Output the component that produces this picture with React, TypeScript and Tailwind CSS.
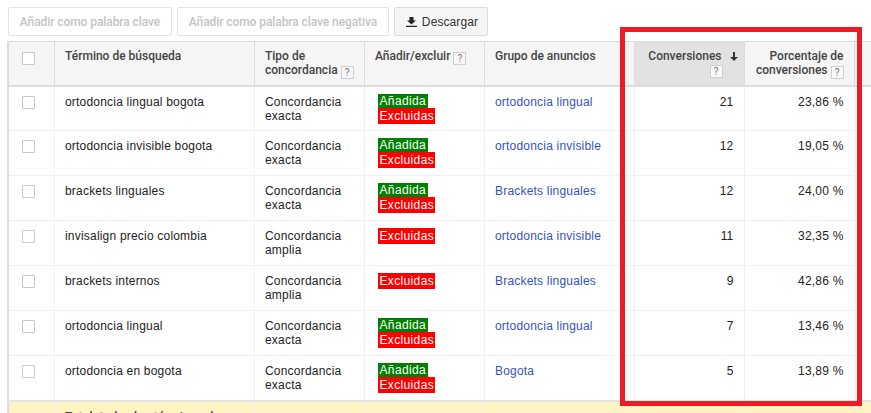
const rows = [
  { term: "ortodoncia lingual bogota", match: "exacta", added: true, group: "ortodoncia lingual", conv: "21", pct: "23,86 %" },
  { term: "ortodoncia invisible bogota", match: "exacta", added: true, group: "ortodoncia invisible", conv: "12", pct: "19,05 %" },
  { term: "brackets linguales", match: "exacta", added: true, group: "Brackets linguales", conv: "12", pct: "24,00 %" },
  { term: "invisalign precio colombia", match: "amplia", added: false, group: "ortodoncia invisible", conv: "11", pct: "32,35 %" },
  { term: "brackets internos", match: "amplia", added: false, group: "Brackets linguales", conv: "9", pct: "42,86 %" },
  { term: "ortodoncia lingual", match: "exacta", added: true, group: "ortodoncia lingual", conv: "7", pct: "13,46 %" },
  { term: "ortodoncia en bogota", match: "exacta", added: true, group: "Bogota", conv: "5", pct: "13,89 %" },
];

const roboto = { fontFamily: 'Roboto, "Liberation Sans", sans-serif' };

function Help() {
  return (
    <span className="inline-block w-[13px] h-[13px] ml-[3px] border border-[#cfcfcf] bg-[#f8f8f8] text-[#777] text-[10px] leading-[11px] text-center align-[-2px] tracking-normal font-normal">?</span>
  );
}

function Box() {
  return <span className="block w-[13px] h-[13px] bg-white border border-[#c8c8c8] rounded-[1px] ml-[2px]" />;
}

const th = "border-r border-[#dcdcdc] align-top pl-[10.5px] pr-[10px] pt-[7px] font-medium text-[#444] text-left tracking-[0px]";
const td = "border-r border-b border-[#f0f0f0] align-top pl-[10.5px] pr-[10px] pt-[8px]";
const foot = "border-r border-[#f0f0f0] bg-[#fff4c2]";

export default function App() {
  return (
    <div className="relative w-[871px] h-[413px] overflow-hidden bg-white text-[12px] leading-[14px] tracking-[0.2px] text-[#222]" style={{ fontFamily: '"Liberation Sans", Arial, sans-serif' }}>
      <div className="flex gap-[5px] pl-[8px] pt-[7px] h-[41px] items-start" style={roboto}>
        <div className="h-[29px] w-[164px] border border-[#e3e3e3] rounded-[2px] flex items-center justify-center font-medium tracking-[-0.08px] whitespace-nowrap text-[#c4c4c4]">Añadir como palabra clave</div>
        <div className="h-[29px] w-[212px] border border-[#e3e3e3] rounded-[2px] flex items-center justify-center font-medium tracking-[-0.08px] whitespace-nowrap text-[#c4c4c4]">Añadir como palabra clave negativa</div>
        <div className="h-[29px] w-[94px] border border-[#dcdcdc] rounded-[2px] bg-[#f5f5f5] flex items-center justify-center gap-[5px] pl-[2px] tracking-[0.1px] text-[#333]" style={{ fontFamily: '"Liberation Sans", sans-serif' }}>
          <svg width="11" height="10" viewBox="0 0 11 10" fill="#222"><path d="M3.500 0h4v3.500H10L5.500 7.500 1 3.500h2.500zM0 8.700h11V10H0z" /></svg>
          Descargar
        </div>
      </div>
      <table className="border-collapse table-fixed w-[864px] ml-[7px] border-l-2 border-[#dcdcdc]">
        <colgroup>
          <col className="w-[46px]" />
          <col className="w-[200px]" />
          <col className="w-[110px]" />
          <col className="w-[120px]" />
          <col className="w-[150px]" />
          <col className="w-[110px]" />
          <col className="w-[110px]" />
          <col />
        </colgroup>
        <thead style={roboto}>
          <tr className="h-[44px] bg-[#f5f5f5] border-t border-b-2 border-[#dcdcdc]">
            <th className={th}><div className="pt-[3px]"><Box /></div></th>
            <th className={th}>Término de búsqueda</th>
            <th className={th}>Tipo de<br /><span className="whitespace-nowrap">concordancia<Help /></span></th>
            <th className={th}><span className="whitespace-nowrap">Añadir/excluir<Help /></span></th>
            <th className={th}>Grupo de anuncios</th>
            <th className={`${th} !text-right !pr-[6px] bg-[#e2e2e2]`}>
              <span className="inline-flex items-center gap-[8px]">Conversiones
                <svg width="8" height="9" viewBox="0 0 8 9" fill="#333"><path d="M3 0h2v5h3L4 9 0 5h3z" /></svg>
              </span>
              <div className="pr-[15px] leading-[13px]"><Help /></div>
            </th>
            <th className={`${th} !text-right`}>Porcentaje de<br /><span className="whitespace-nowrap">conversiones<Help /></span></th>
            <th className="" />
          </tr>
        </thead>
        <tbody>
          {rows.map((r) => (
            <tr key={r.term + r.conv} className="h-[45px]">
              <td className={td}><div className="pt-[1px]"><Box /></div></td>
              <td className={td}>{r.term}</td>
              <td className={td}>Concordancia<br />{r.match}</td>
              <td className="border-r border-b border-[#f0f0f0] align-top pl-[13px] pt-[7px] text-white tracking-[0.35px]">
                {r.added && <span className="block w-[50px] h-[14px] bg-[#008000] pl-[2px]">Añadida</span>}
                <span className="block w-[57px] h-[16px] leading-[16px] bg-[#ff0000] pl-[2px]">Excluidas</span>
              </td>
              <td className={`${td} text-[#3353c4]`}>{r.group}</td>
              <td className={`${td} text-right`}>{r.conv}</td>
              <td className={`${td} text-right`}>{r.pct}</td>
              <td className="" />
            </tr>
          ))}
          <tr className="border-t-2 border-[#e4e4e4]">
            <td className={foot} />
            <td className={`${foot} align-top pl-[10.5px] pr-[10px] pt-[8px] font-medium text-[#444]`} style={roboto}>Total: todos los términos de búsqueda</td>
            <td className={foot} />
            <td className={foot} />
            <td className={foot} />
            <td className={foot} />
            <td className={foot} />
            <td className="bg-[#fff4c2]" />
          </tr>
        </tbody>
      </table>
      <div className="absolute left-[620px] top-[27px] w-[242px] h-[379px] border-[5px] border-[#ed1c24]" />
    </div>
  );
}
